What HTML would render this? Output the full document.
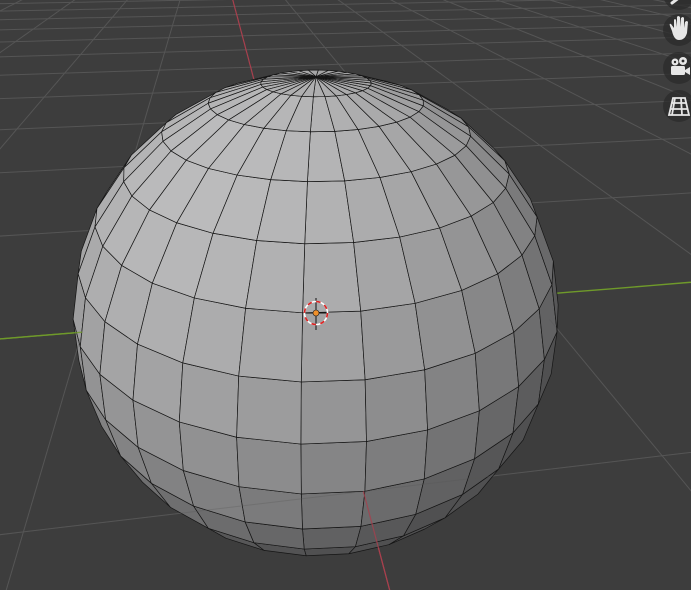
<!DOCTYPE html>
<html><head><meta charset="utf-8"><style>
html,body{margin:0;padding:0;background:#3d3d3d;width:691px;height:590px;overflow:hidden}
svg{display:block}
</style></head><body>
<svg id="s" width="691" height="590" viewBox="0 0 691 590" xmlns="http://www.w3.org/2000/svg">
<rect width="691" height="590" fill="#3d3d3d"/>
<g id="gridBack"></g>
<g id="sphere"></g>
<g id="gridFront"></g>
<g id="cursor">
 <line x1="304" y1="313" x2="328" y2="313" stroke="#111" stroke-width="1"/>
 <line x1="316" y1="298" x2="316" y2="330" stroke="#111" stroke-width="1"/>
 <circle cx="316" cy="313" r="11.5" fill="none" stroke="#fff" stroke-width="1.6"/>
 <circle cx="316" cy="313" r="11.5" fill="none" stroke="#e02020" stroke-width="1.6" stroke-dasharray="4.5 4.5"/>
 <circle cx="316" cy="313" r="3" fill="#f0902a" stroke="#222" stroke-width="0.6"/>
</g>
<g id="icons">
 <circle cx="679" cy="-6" r="16" fill="#2b2b2b" fill-opacity="0.75"/>
 <circle cx="679" cy="30" r="16" fill="#2b2b2b" fill-opacity="0.75"/>
 <circle cx="679" cy="68" r="16" fill="#2b2b2b" fill-opacity="0.75"/>
 <circle cx="679" cy="106" r="16" fill="#2b2b2b" fill-opacity="0.75"/>
 <path d="M672 3 L680 -3" stroke="#e6e6e6" stroke-width="3" stroke-linecap="round"/>
 <path d="M672 31 L670 26 Q669 23 671 24 L674 28 L674 20 Q675 18 676 20 L677 27 L677 17 Q678 15 680 17 L680 27 L681 18 Q683 16 684 18 L684 28 L685 22 Q687 20 688 22 L687 33 Q685 40 679 40 Q674 40 672 31 Z" fill="#e6e6e6"/>
 <circle cx="675" cy="62" r="3.5" fill="#e6e6e6"/>
 <circle cx="683" cy="61" r="4" fill="#e6e6e6"/>
 <rect x="671" y="66" width="14" height="9" rx="1.5" fill="#e6e6e6"/>
 <path d="M685 70 L690 67 L690 75 L685 72 Z" fill="#e6e6e6"/>
 <circle cx="675" cy="62" r="1.2" fill="#2b2b2b"/>
 <circle cx="683" cy="61" r="1.4" fill="#2b2b2b"/>
 <path d="M673 98 L685 98 L689 115 L669 115 Z M675 98 L672 115 M681 98 L682 115 M672 103 L686 103 M670 109 L688 109" fill="none" stroke="#e6e6e6" stroke-width="1.8"/>
</g>
</svg>
<script>
(function(){
var D=2.7, e=33.75*Math.PI/180, az=8.4*Math.PI/180;
var cx=316, cy=313;
var s=Math.sin(e), c=Math.cos(e);
var C=[0,D*s,D*c];
var fwd=[0,-s,-c], right=[1,0,0], up=[0,c,-s];
var f=243/Math.tan(Math.asin(1/D));
function dot(a,b){return a[0]*b[0]+a[1]*b[1]+a[2]*b[2];}
function rot(p){var ca=Math.cos(az),sa=Math.sin(az);return [p[0]*ca+p[2]*sa,p[1],-p[0]*sa+p[2]*ca];}
function proj(p){var v=[p[0]-C[0],p[1]-C[1],p[2]-C[2]];var zc=dot(v,fwd);return [cx+f*dot(v,right)/zc, cy-f*dot(v,up)/zc, zc];}
var segs=32, rings=16, out="";
var L=[-0.35,0.45,0.82];var ll=Math.hypot(L[0],L[1],L[2]);L=L.map(function(x){return x/ll;});
function sp(i,j){var lat=-Math.PI/2+Math.PI*j/rings, lon=2*Math.PI*i/segs-0.045;
 return [Math.cos(lat)*Math.sin(lon),Math.sin(lat),Math.cos(lat)*Math.cos(lon)];}
for(var j=0;j<rings;j++){for(var i=0;i<segs;i++){
 var pts=[sp(i,j),sp(i+1,j),sp(i+1,j+1),sp(i,j+1)];
 var n=[0,0,0];pts.forEach(function(p){n[0]+=p[0];n[1]+=p[1];n[2]+=p[2];});
 var nl=Math.hypot(n[0],n[1],n[2]);n=n.map(function(x){return x/nl;});
 var tc=[C[0]-n[0],C[1]-n[1],C[2]-n[2]];
 if(dot(n,tc)<=0)continue;
 var cn=[dot(n,right),dot(n,up),-dot(n,fwd)];
 var d=Math.max(0,dot(cn,L));
 var v=Math.round(80+108*d);
 var str=pts.map(function(p){var q=proj(p);return q[0].toFixed(2)+","+q[1].toFixed(2);}).join(" ");
 out+='<polygon points="'+str+'" fill="rgb('+v+','+v+','+(v+1)+')" stroke="#151515" stroke-width="0.7" stroke-linejoin="round"/>';
}}
document.getElementById("sphere").innerHTML=out;
var sp2=1, N=40, back="", front="";
function line(p0,p1,col,w,isAxis){
 var steps=400, segB=[], segF=[], cb=[], cf=[];
 for(var k=0;k<=steps;k++){
  var t=k/steps; var p=[p0[0]+(p1[0]-p0[0])*t,0,p0[2]+(p1[2]-p0[2])*t];
  var pr=rot(p); var q=proj(pr);
  var ok=q[2]>0.2;
  var inside=(p[0]*p[0]+p[2]*p[2])<1;
  var toward=pr[2]>0;
  var isF=ok&&!inside&&toward;
  var pt=q[0].toFixed(1)+","+q[1].toFixed(1);
  if(ok){cb.push(pt);}else{if(cb.length>1)segB.push(cb);cb=[];}
  if(isF){cf.push(pt);}else{if(cf.length>1)segF.push(cf);cf=[];}
 }
 if(cb.length>1)segB.push(cb); if(cf.length>1)segF.push(cf);
 segB.forEach(function(a){back+='<polyline points="'+a.join(" ")+'" fill="none" stroke="'+col+'" stroke-width="'+w+'"/>';});
 segF.forEach(function(a){front+='<polyline points="'+a.join(" ")+'" fill="none" stroke="'+col+'" stroke-opacity="'+(isAxis?0.8:0.3)+'" stroke-width="'+w+'"/>';});
}
var Ext=N*sp2;
for(var k=-N;k<=N;k++){
 if(k===0)continue;
 line([k*sp2,0,-Ext],[k*sp2,0,Ext],"#555555",1);
 line([-Ext,0,k*sp2],[Ext,0,k*sp2],"#555555",1);
}
line([0,0,-Ext],[0,0,Ext],"#a8404e",1.2,true);
line([-Ext,0,0],[Ext,0,0],"#6f9a2a",1.4,true);
document.getElementById("gridBack").innerHTML=back;
document.getElementById("gridFront").innerHTML=front;
})();
</script>
</body></html>
